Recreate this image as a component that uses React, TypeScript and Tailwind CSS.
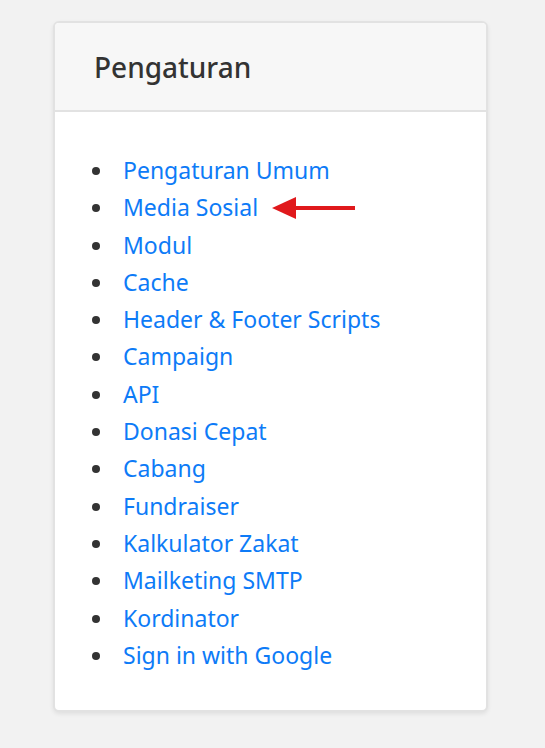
const items = [
  "Pengaturan Umum",
  "Media Sosial",
  "Modul",
  "Cache",
  "Header & Footer Scripts",
  "Campaign",
  "API",
  "Donasi Cepat",
  "Cabang",
  "Fundraiser",
  "Kalkulator Zakat",
  "Mailketing SMTP",
  "Kordinator",
  "Sign in with Google",
];

function Arrow() {
  return (
    <svg width="84" height="24" viewBox="0 0 84 24" className="ml-[14px]">
      <line x1="20" y1="12" x2="83" y2="12" stroke="#e0191c" strokeWidth="4" />
      <polygon points="0,12 24,1 24,23" fill="#e0191c" />
    </svg>
  );
}

export default function App() {
  return (
    <div
      className="min-h-[748px] bg-[#f2f2f2] pt-[21px] pl-[53px] pr-[57px] pb-[37px]"
      style={{ fontFamily: '"Noto Sans", "Open Sans", sans-serif' }}
    >
      <div className="w-[435px] rounded-md border-2 border-[#e2e2e2] bg-white shadow-[0_2px_4px_rgba(0,0,0,0.08)] overflow-hidden">
        <div className="h-[89px] bg-[#f7f7f7] border-b-2 border-[#e2e2e2] flex items-center pl-[39px]">
          <h2 className="text-[28px] font-medium text-[#333] leading-none">Pengaturan</h2>
        </div>
        <ul className="list-disc pl-[60px] pt-[40px] pb-[36px] text-[23px] leading-[37.3px] text-[#333] marker:text-[#333]">
          {items.map((item, i) => (
            <li key={item} className="pl-[8px]">
              <span className="inline-flex items-center">
                <a href="#" className="text-[#0d7bf7]">{item}</a>
                {i === 1 && <Arrow />}
              </span>
            </li>
          ))}
        </ul>
      </div>
    </div>
  );
}
